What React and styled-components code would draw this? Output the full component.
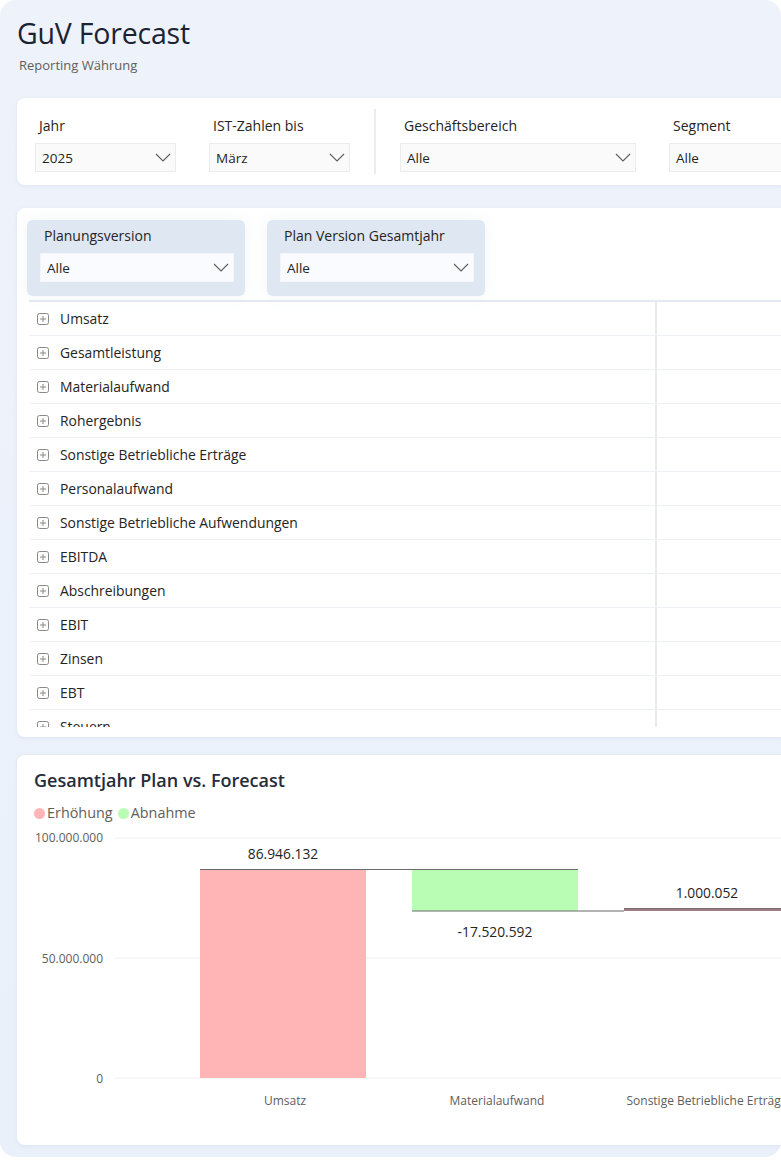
import React from "react";
import styled, { createGlobalStyle } from "styled-components";

const GlobalStyle = createGlobalStyle`
  html, body {
    margin: 0;
    padding: 0;
    background: #ffffff;
  }
  body {
    font-family: "Open Sans", "Noto Sans", sans-serif;
    color: #252423;
  }
`;

const Frame = styled.div`
  width: 781px;
  height: 1157px;
  border-radius: 16px;
  overflow: hidden;
  background: linear-gradient(180deg, #eef3fb 0%, #eaf0fa 100%);
  padding: 0 0 0 17px;
  box-sizing: border-box;
`;

const Header = styled.div`
  padding: 15px 0 0 0;
  height: 98px;
  box-sizing: border-box;
`;

const Title = styled.h1`
  margin: 0;
  font-size: 28.5px;
  font-weight: 500;
  line-height: 36px;
  color: #1b2333;
  letter-spacing: -0.2px;
`;

const Subtitle = styled.div`
  margin-top: 5px;
  font-size: 13px;
  line-height: 18px;
  color: #605e5c;
  padding-left: 2px;
`;

const Card = styled.div`
  width: 900px;
  background: #ffffff;
  border-radius: 8px;
  box-shadow: 0 1px 4px rgba(120, 140, 180, 0.12);
  box-sizing: border-box;
`;

const FilterCard = styled(Card)`
  height: 87px;
  display: flex;
  align-items: center;
  padding: 0 0 0 18px;
  gap: 33px;
`;

const Field = styled.div`
  display: flex;
  flex-direction: column;
  gap: 8px;
  width: ${(p) => p.$w}px;
  padding-top: 6px;
`;

const FieldLabel = styled.div`
  font-size: 14px;
  line-height: 18px;
  color: #252423;
  padding-left: 4px;
`;

const Select = styled.div`
  height: 29px;
  box-sizing: border-box;
  display: flex;
  align-items: center;
  justify-content: space-between;
  padding: 0 4px 0 6px;
  background: ${(p) => (p.$onBlue ? "#f9fbfe" : "#fafafa")};
  border: 1px solid ${(p) => (p.$onBlue ? "#f2f5fa" : "#ececec")};
  font-size: 13.5px;
  color: #252423;
`;

const Divider = styled.div`
  width: 2px;
  height: 65px;
  background: #e8ecf3;
  margin: 0 -9px 0 -9px;
`;

const Chevron = () => (
  <svg width="16" height="9" viewBox="0 0 16 9">
    <path d="M1 1 L8 8 L15 1" fill="none" stroke="#605e5c" strokeWidth="1.1" />
  </svg>
);

const Dropdown = ({ value, onBlue }) => (
  <Select $onBlue={onBlue}>
    <span>{value}</span>
    <Chevron />
  </Select>
);

const Gap = styled.div`
  height: ${(p) => p.$h}px;
`;

const TableCard = styled(Card)`
  height: 529px;
  padding: 12px 0 0 10px;
`;

const SlicerRow = styled.div`
  display: flex;
  gap: 22px;
`;

const Slicer = styled.div`
  width: 218px;
  height: 76px;
  box-sizing: border-box;
  background: #dfe7f3;
  border-radius: 6px;
  padding: 7px 11px 0 13px;
  display: flex;
  flex-direction: column;
  gap: 8px;
  box-shadow: 0 0 14px rgba(200, 210, 225, 0.25);
`;

const Table = styled.div`
  margin: 4px 0 0 2px;
  border-top: 2px solid #e5e9f3;
  height: 425px;
  overflow: hidden;
`;

const Row = styled.div`
  display: grid;
  grid-template-columns: 626px 2px 1fr;
  height: 34px;
  box-sizing: border-box;
  border-bottom: 1px solid #eef0f5;
`;

const LabelCell = styled.div`
  display: flex;
  align-items: center;
  gap: 11px;
  padding-left: 8px;
  font-size: 13.9px;
  color: #252423;
`;

const VLine = styled.div`
  background: #e8ebf3;
`;

const ExpandIcon = () => (
  <svg width="12" height="12" viewBox="0 0 12 12">
    <rect x="0.5" y="0.5" width="11" height="11" rx="2" fill="none" stroke="#8a8886" strokeWidth="1" />
    <path d="M3 6 H9 M6 3 V9" stroke="#8a8886" strokeWidth="1" />
  </svg>
);

const ChartCard = styled(Card)`
  height: 390px;
  padding: 13px 0 0 0;
`;

const ChartTitle = styled.div`
  padding-left: 17px;
  font-size: 18px;
  font-weight: 600;
  line-height: 24px;
  color: #252c3a;
`;

const Legend = styled.div`
  margin-top: 12px;
  padding-left: 17px;
  display: flex;
  align-items: center;
  gap: 5px;
  font-size: 14.4px;
  line-height: 18px;
  color: #605e5c;
`;

const LegendItem = styled.span`
  display: inline-flex;
  align-items: center;
  gap: 2px;

  &::before {
    content: "";
    width: 11px;
    height: 11px;
    border-radius: 50%;
    background: ${(p) => p.$color};
  }
`;

const ChartSvg = styled.svg`
  display: block;
  margin-top: 4px;
`;

const rows = [
  "Umsatz",
  "Gesamtleistung",
  "Materialaufwand",
  "Rohergebnis",
  "Sonstige Betriebliche Erträge",
  "Personalaufwand",
  "Sonstige Betriebliche Aufwendungen",
  "EBITDA",
  "Abschreibungen",
  "EBIT",
  "Zinsen",
  "EBT",
  "Steuern",
];

const Chart = () => {
  const axis = { fontSize: 12, fill: "#605e5c", fontFamily: "Open Sans, sans-serif" };
  const val = { fontSize: 13.8, fill: "#252423", fontFamily: "Open Sans, sans-serif" };
  return (
    <ChartSvg width="780" height="319" viewBox="0 0 780 319">
      {[12, 132, 252].map((y) => (
        <line key={y} x1="98" x2="780" y1={y} y2={y} stroke="#eef0f5" strokeWidth="1" />
      ))}
      <text x="86" y="11" textAnchor="end" dominantBaseline="central" {...axis}>100.000.000</text>
      <text x="86" y="132" textAnchor="end" dominantBaseline="central" {...axis}>50.000.000</text>
      <text x="86" y="252" textAnchor="end" dominantBaseline="central" {...axis}>0</text>

      <rect x="183" y="43" width="166" height="209" fill="#ffb5b5" />
      <rect x="395" y="43" width="166" height="42" fill="#b9fdb4" />
      <rect x="607" y="82" width="200" height="3" fill="#a07d84" />
      <line x1="183" x2="395" y1="43.5" y2="43.5" stroke="#6b6b6b" strokeWidth="1.2" />
      <line x1="395" x2="561" y1="43.5" y2="43.5" stroke="#6b6b6b" strokeWidth="1.2" />
      <line x1="395" x2="607" y1="85" y2="85" stroke="#6b6b6b" strokeWidth="1.2" />
      <line x1="607" x2="780" y1="82.5" y2="82.5" stroke="#7a6a6e" strokeWidth="1" />

      <text x="266" y="27" textAnchor="middle" dominantBaseline="central" {...val}>86.946.132</text>
      <text x="478" y="105" textAnchor="middle" dominantBaseline="central" {...val}>-17.520.592</text>
      <text x="690" y="66" textAnchor="middle" dominantBaseline="central" {...val}>1.000.052</text>

      <text x="268" y="274" textAnchor="middle" dominantBaseline="central" {...axis}>Umsatz</text>
      <text x="480" y="274" textAnchor="middle" dominantBaseline="central" {...axis}>Materialaufwand</text>
      <text x="690" y="274" textAnchor="middle" dominantBaseline="central" {...axis}>Sonstige Betriebliche Erträge</text>
    </ChartSvg>
  );
};

export default function App() {
  return (
    <>
      <GlobalStyle />
      <Frame>
        <Header>
          <Title>GuV Forecast</Title>
          <Subtitle>Reporting Währung</Subtitle>
        </Header>

        <FilterCard>
          <Field $w={141}>
            <FieldLabel>Jahr</FieldLabel>
            <Dropdown value="2025" />
          </Field>
          <Field $w={141}>
            <FieldLabel>IST-Zahlen bis</FieldLabel>
            <Dropdown value="März" />
          </Field>
          <Divider />
          <Field $w={236}>
            <FieldLabel>Geschäftsbereich</FieldLabel>
            <Dropdown value="Alle" />
          </Field>
          <Field $w={236}>
            <FieldLabel>Segment</FieldLabel>
            <Dropdown value="Alle" />
          </Field>
        </FilterCard>

        <Gap $h={23} />

        <TableCard>
          <SlicerRow>
            <Slicer>
              <FieldLabel>Planungsversion</FieldLabel>
              <Dropdown value="Alle" onBlue />
            </Slicer>
            <Slicer>
              <FieldLabel>Plan Version Gesamtjahr</FieldLabel>
              <Dropdown value="Alle" onBlue />
            </Slicer>
          </SlicerRow>
          <Table>
            {rows.map((r) => (
              <Row key={r}>
                <LabelCell>
                  <ExpandIcon />
                  {r}
                </LabelCell>
                <VLine />
                <div />
              </Row>
            ))}
          </Table>
        </TableCard>

        <Gap $h={18} />

        <ChartCard>
          <ChartTitle>Gesamtjahr Plan vs. Forecast</ChartTitle>
          <Legend>
            <LegendItem $color="#ffb5b5">Erhöhung</LegendItem>
            <LegendItem $color="#b9fdb4">Abnahme</LegendItem>
          </Legend>
          <Chart />
        </ChartCard>
      </Frame>
    </>
  );
}
